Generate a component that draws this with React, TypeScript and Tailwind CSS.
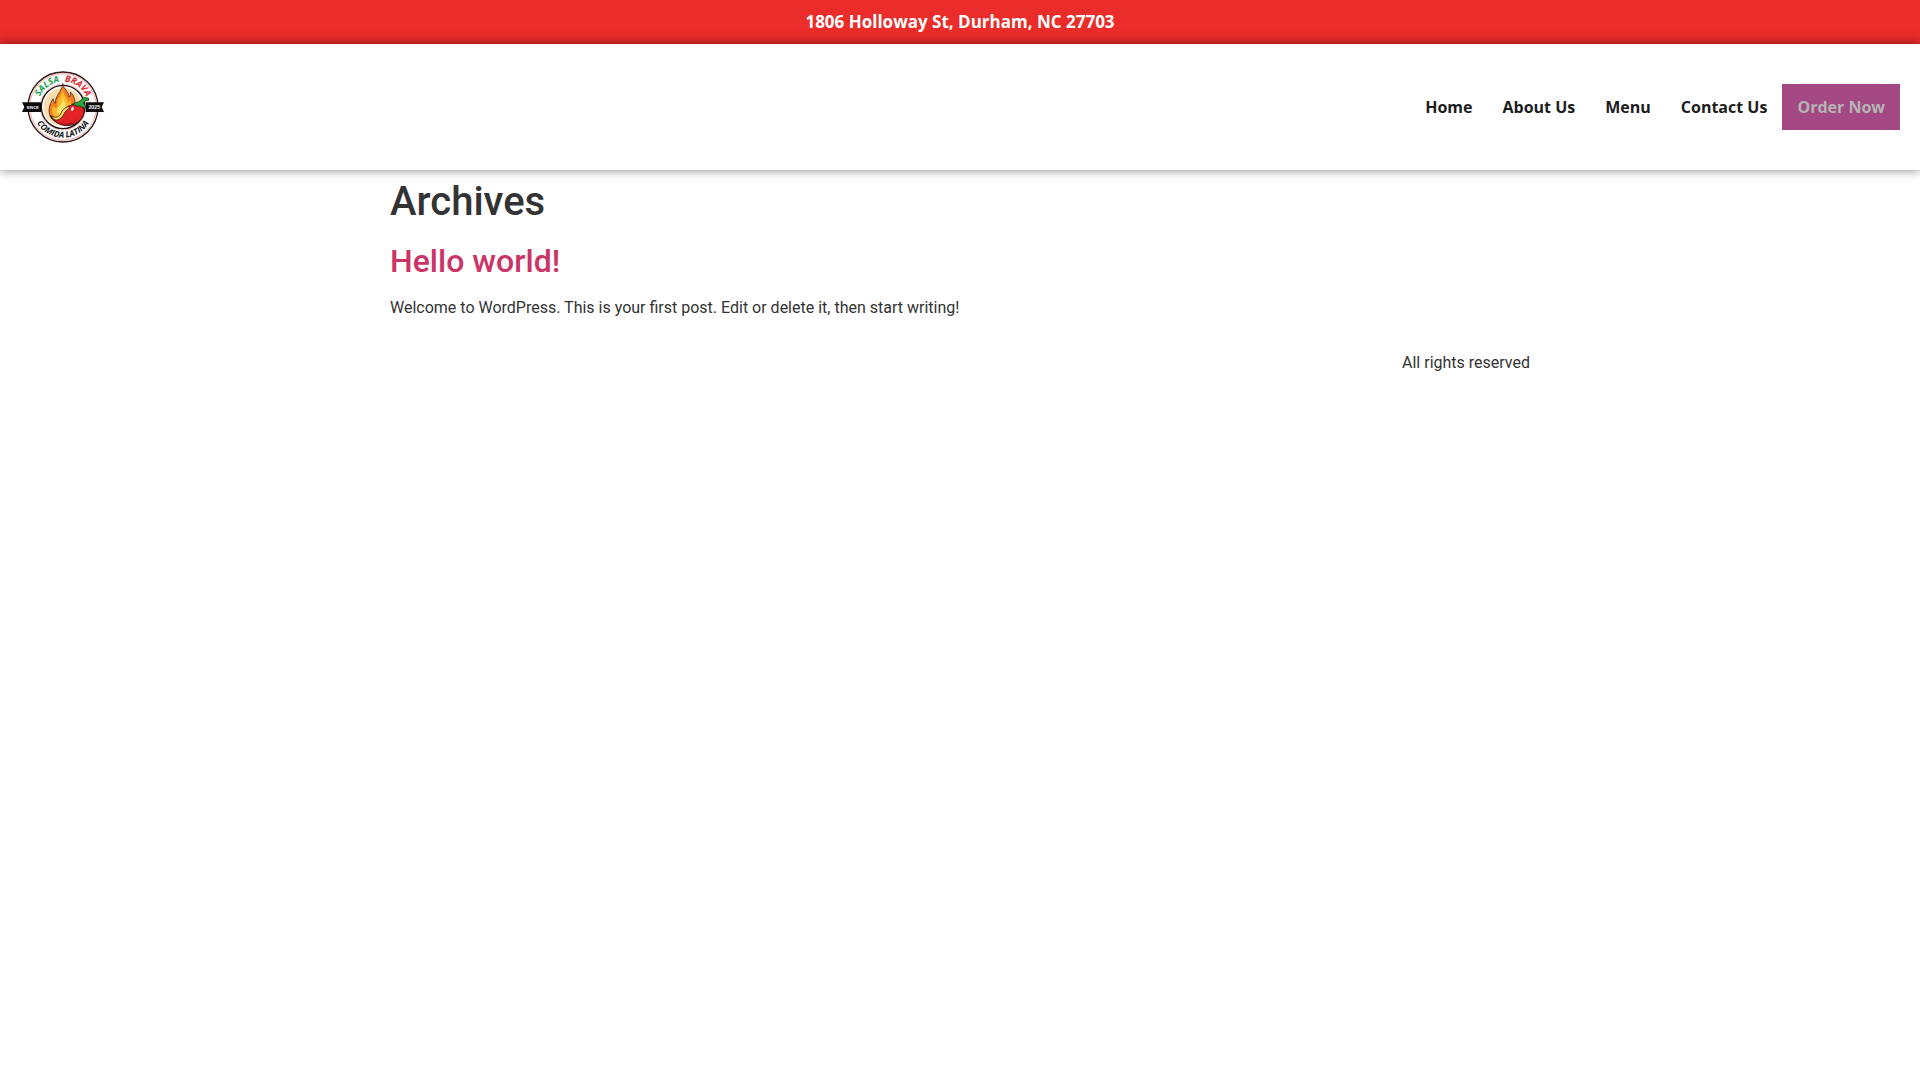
type NavLink = { label: string; href: string };

const navLinks: NavLink[] = [
  { label: 'Home', href: '#home' },
  { label: 'About Us', href: '#about' },
  { label: 'Menu', href: '#menu' },
  { label: 'Contact Us', href: '#contact' },
];

const Logo = () => (
  <svg className="w-[82px] h-[74px]" viewBox="33 30 246 222" role="img" aria-label="Salsa Brava">
    <defs>
      <path id="arc-top" d="M 80 141 A 76 76 0 0 1 232 141" />
      <path id="arc-bottom" d="M 64 141 A 92 92 0 0 0 248 141" />
    </defs>

    {/* Rings */}
    <circle cx="156" cy="141" r="105" fill="#fff" stroke="#2b1715" strokeWidth="4" />
    <circle cx="156" cy="141" r="100" fill="none" stroke="#f3a6a3" strokeWidth="3" />
    <circle cx="156" cy="141" r="69" fill="#fff" stroke="#f3a6a3" strokeWidth="2" />
    <circle cx="156" cy="141" r="65" fill="#fff" stroke="#1c1010" strokeWidth="4" />
    <circle cx="156" cy="141" r="58" fill="#fbdcae" />

    {/* Ribbon */}
    <path d="M33 127H90V156H33L40 141Z" fill="#0b0b0b" />
    <path d="M279 127H224V156H279L272 141Z" fill="#0b0b0b" />
    <g className="font-['Liberation_Sans',sans-serif]" fontWeight="700" fill="#fff" textAnchor="middle">
      <text x="65" y="146" fontSize="12">SINCE</text>
      <text x="250" y="147" fontSize="16">2025</text>
    </g>

    {/* Flame */}
    <path
      d="M155 71C158 89 174 94 175 111C179 107 180 101 178 96C190 108 194 121 191 139L170 187C146 196 119 184 115 160C112 141 119 129 126 116C127 123 129 127 133 130C131 108 154 94 155 71Z"
      fill="#f57c1f"
      stroke="#20100c"
      strokeWidth="2"
    />
    <path
      d="M154 87C157 106 171 112 171 128C174 126 177 121 178 115C184 130 179 149 170 159L139 178C126 169 121 154 125 139C130 144 135 145 139 141C136 119 151 109 154 87Z"
      fill="#fdb92e"
    />
    <path d="M156 112C158 125 168 131 164 143L144 163C137 156 137 145 145 139C151 133 156 124 156 112Z" fill="#ffe36b" />

    {/* Chili */}
    <path
      d="M178 137C187 127 208 130 217 141C225 158 214 182 192 192C168 202 133 196 118 167C130 178 146 177 151 165C157 151 163 141 178 137Z"
      fill="#e32225"
      stroke="#1c0c0b"
      strokeWidth="3"
      strokeLinejoin="round"
    />
    <path
      d="M120 168C135 175 145 171 150 160C153 151 160 143 172 139C180 146 164 150 160 160C152 178 139 184 128 178Z"
      fill="#ffd45a"
      stroke="#1c0c0b"
      strokeWidth="2"
    />
    <path d="M135 184C158 196 187 190 201 174C190 200 151 203 135 184Z" fill="#b3171c" />
    <path d="M181 144C187 138 190 143 187 150C184 155 178 153 181 144Z" fill="#fff" />
    <path
      d="M186 135C193 124 202 128 207 123C213 112 224 110 234 116L232 122C223 120 219 124 217 130C223 134 223 140 222 146C216 139 211 143 206 138C199 142 195 133 186 135Z"
      fill="#28a33f"
      stroke="#14250f"
      strokeWidth="2"
      strokeLinejoin="round"
    />

    {/* Lettering */}
    <g className="font-['Open_Sans',sans-serif]" fontWeight="700" fontStyle="italic">
      <text fontSize="27" fill="#11a34a">
        <textPath href="#arc-top" startOffset="32">SALSA</textPath>
      </text>
      <text fontSize="27" fill="#e5252f">
        <textPath href="#arc-top" startOffset="124">BRAVA</textPath>
      </text>
      <text fontSize="25" fill="#111" textAnchor="middle">
        <textPath href="#arc-bottom" startOffset="50%">COMIDA LATINA</textPath>
      </text>
    </g>
  </svg>
);

const TopBar = () => (
  <div className="flex h-11 items-center justify-center bg-[#ea2c2a] px-5">
    <p className="font-['Open_Sans',sans-serif] text-[17px] leading-6 font-bold text-white">
      1806 Holloway St, Durham, NC 27703
    </p>
  </div>
);

const Header = () => (
  <header className="relative flex items-center justify-between bg-white py-[26px] pr-5 pl-[22px] shadow-[0_0_10px_rgba(0,0,0,0.5)]">
    <a href="#home">
      <Logo />
    </a>
    <nav className="flex items-center font-['Open_Sans',sans-serif] text-base leading-5 font-bold text-[#1c1c1c]">
      {navLinks.map((link) => (
        <a key={link.label} href={link.href} className="px-[15px] py-[13px]">
          {link.label}
        </a>
      ))}
      <a href="#order" className="bg-[#a34883] px-[15px] py-[13px] text-[#b5b5b5]">
        Order Now
      </a>
    </nav>
  </header>
);

const App = () => {
  return (
    <div className="min-h-screen bg-white font-['Roboto',sans-serif] text-base text-[#333333]">
      <TopBar />
      <Header />

      <main className="mx-auto max-w-[1140px] pt-2">
        <h1 className="text-[40px] leading-12 font-medium">Archives</h1>
        <article className="mt-4">
          <h2 className="text-[32px] leading-[38px] font-medium text-[#cc3366]">
            <a href="#hello-world">Hello world!</a>
          </h2>
          <p className="mt-4">
            Welcome to WordPress. This is your first post. Edit or delete it, then start writing!
          </p>
        </article>
      </main>

      <footer className="mx-auto mt-[31px] max-w-[1140px] text-right">
        <p>All rights reserved</p>
      </footer>
    </div>
  );
};

export default App;
